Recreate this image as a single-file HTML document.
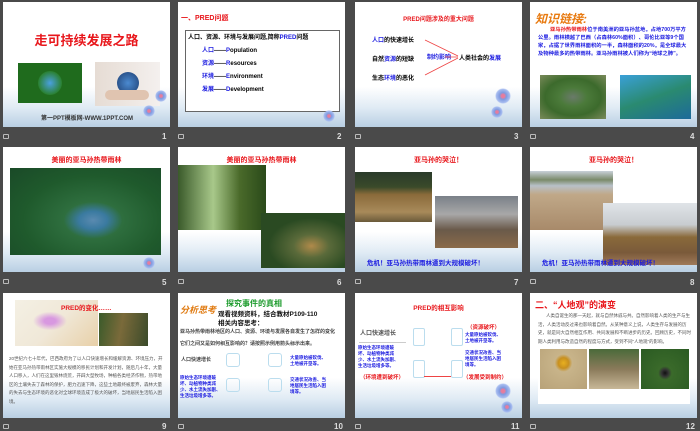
<!DOCTYPE html>
<html><head><meta charset="utf-8"><style>
*{margin:0;padding:0;box-sizing:border-box}
body{width:700px;height:431px;background:#4a4a4a;position:relative;overflow:hidden;font-family:"Liberation Sans","Noto Sans CJK SC",sans-serif}
.s{position:absolute;width:167px;height:125px;background:linear-gradient(#fff 0,#fff 68%,#dfeaf4 85%,#b9cfe3 100%);overflow:hidden}
.s div,.s svg{position:absolute}
.s span{position:static}
.lab{position:absolute;color:#ddd;font-size:8px;font-weight:bold}
.ic{position:absolute;width:6px;height:5px;border:1px solid #bbb;border-radius:1px}
.t{font-weight:bold;white-space:nowrap;font-size:8px}
.red{color:#e8161b}.blue{color:#1a1ae0}
.fl{width:12px;height:12px;border-radius:50%;background:radial-gradient(#e87c9c 15%,#7f9ae0 30%,#a8bdf0 60%,transparent 70%)}
</style></head><body>

<!-- Row 1 -->
<div class="s" style="left:3px;top:2px">
 <div class="t red" style="left:0;width:167px;text-align:center;top:28px;font-size:13px">走可持续发展之路</div>
 <div style="left:15px;top:61px;width:64px;height:40px;background:#1f6b1d"><div style="left:20px;top:8px;width:24px;height:24px;border-radius:50%;background:radial-gradient(#4aa0e0,#2a8030 70%);"></div></div>
 <div style="left:92px;top:60px;width:65px;height:44px;background:linear-gradient(90deg,#e6dcd4,#f4f0ee)"><div style="left:22px;top:10px;width:22px;height:22px;border-radius:50%;background:radial-gradient(#4b8ad0,#1d3d70)"></div><div style="left:10px;top:28px;width:44px;height:10px;border-radius:6px;background:#e0c4b0"></div></div>
 <div class="t" style="left:38px;top:111px;font-size:6px;color:#333">第一PPT模板网-WWW.1PPT.COM</div>
 <div class="fl" style="left:140px;top:103px"></div><div class="fl" style="left:152px;top:88px"></div>
</div>
<div class="ic" style="left:3px;top:134px"></div><div class="lab" style="left:162px;top:132px">1</div>

<div class="s" style="left:178px;top:2px">
 <div class="t red" style="left:3px;top:11px;font-size:7px">一、PRED问题</div>
 <div style="left:7px;top:28px;width:155px;height:82px;border:1px solid #666;background:#fff">
  <div class="t" style="left:2px;top:1px;font-size:6px;color:#000">人口、资源、环境与发展问题,简称<span class="blue">PRED</span>问题</div>
  <div class="t" style="left:16px;top:14px;font-size:6px;color:#000"><span class="blue">人口</span>——<span class="blue">P</span>opulation</div>
  <div class="t" style="left:16px;top:27px;font-size:6px;color:#000"><span class="blue">资源</span>——<span class="blue">R</span>esources</div>
  <div class="t" style="left:16px;top:40px;font-size:6px;color:#000"><span class="blue">环境</span>——<span class="blue">E</span>nvironment</div>
  <div class="t" style="left:16px;top:53px;font-size:6px;color:#000"><span class="blue">发展</span>——<span class="blue">D</span>evelopment</div>
 </div>
 <div class="fl" style="left:145px;top:108px"></div>
</div>
<div class="ic" style="left:178px;top:134px"></div><div class="lab" style="left:337px;top:132px">2</div>

<div class="s" style="left:355px;top:2px">
 <div class="t red" style="left:0;width:167px;text-align:center;top:12px;font-size:6px">PRED问题涉及的重大问题</div>
 <div class="t" style="left:17px;top:33px;font-size:6px;color:#000"><span class="blue">人口</span>的快速增长</div>
 <div class="t" style="left:17px;top:52px;font-size:6px;color:#000">自然<span class="blue">资源</span>的短缺</div>
 <div class="t" style="left:17px;top:71px;font-size:6px;color:#000">生态<span class="blue">环境</span>的恶化</div>
 <div class="t blue" style="left:72px;top:50px;font-size:6px">制约影响</div>
 <div class="t" style="left:104px;top:51px;font-size:6px;color:#000">人类社会的<span class="blue">发展</span></div>
 <svg style="left:0;top:0" width="167" height="125"><path d="M70 38 L103 54 M70 73 L103 56 M90 55 L103 55" stroke="#e44" stroke-width=".8" fill="none"/></svg>
 <div class="fl" style="left:140px;top:86px;width:16px;height:16px"></div><div class="fl" style="left:136px;top:104px"></div>
</div>
<div class="ic" style="left:355px;top:134px"></div><div class="lab" style="left:514px;top:132px">3</div>

<div class="s" style="left:530px;top:2px">
 <div class="t" style="left:5px;top:8px;font-size:12px;color:#e87a10;font-style:italic">知识链接:</div>
 <div style="left:8px;top:24px;width:152px;font-size:5.3px;line-height:8px;font-weight:bold;color:#1a1ae0"><span style="color:#e8161b;padding-left:12px">亚马孙热带雨林</span>位于南美洲的亚马孙盆地，占地700万平方公里。雨林横越了巴西（占森林60%面积）、哥伦比亚等9个国家，占据了世界雨林面积的一半，森林面积的20%，是全球最大及物种最多的热带雨林。亚马孙雨林被人们称为“地球之肺”。</div>
 <div style="left:10px;top:73px;width:66px;height:44px;background:radial-gradient(ellipse at 50% 50%,#6a7a6a 0,#4b7a3a 30%,#3c6a2c 60%,#7a8a5a)"></div>
 <div style="left:90px;top:73px;width:71px;height:44px;background:linear-gradient(160deg,#3aa0d8,#2a8a70 50%,#1d6a9a)"></div>
</div>
<div class="ic" style="left:530px;top:134px"></div><div class="lab" style="left:690px;top:132px">4</div>

<!-- Row 2 -->
<div class="s" style="left:3px;top:147px">
 <div class="t red" style="left:0;width:167px;text-align:center;top:8px;font-size:7px">美丽的亚马孙热带雨林</div>
 <div style="left:7px;top:21px;width:151px;height:87px;background:radial-gradient(ellipse at 55% 60%,#5a8ab0 0,#3a7aa0 12%,#2e6e3e 25%,#1f5a2c 60%,#1a4a28)"></div>
 <div class="fl" style="left:140px;top:110px"></div>
</div>
<div class="ic" style="left:3px;top:279px"></div><div class="lab" style="left:162px;top:278px">5</div>

<div class="s" style="left:178px;top:147px">
 <div class="t red" style="left:0;width:167px;text-align:center;top:8px;font-size:7px">美丽的亚马孙热带雨林</div>
 <div style="left:0;top:18px;width:88px;height:65px;background:linear-gradient(90deg,#3a5a2a,#a8c88a 40%,#4a6a2a 70%,#2a4a1a)"></div>
 <div style="left:83px;top:66px;width:84px;height:55px;background:radial-gradient(ellipse at 60% 60%,#b08a4a 0,#5a6a3a 25%,#2a4a22 60%)"></div>
</div>
<div class="ic" style="left:178px;top:279px"></div><div class="lab" style="left:337px;top:278px">6</div>

<div class="s" style="left:355px;top:147px">
 <div class="t red" style="left:0;width:167px;text-align:center;top:8px;font-size:7px">亚马孙的哭泣！</div>
 <div style="left:0;top:25px;width:77px;height:50px;background:linear-gradient(#2a3a2a 0,#3a4a2a 30%,#8a6a3a 45%,#a88a5a 80%,#6a5a3a)"></div>
 <div style="left:80px;top:49px;width:83px;height:52px;background:linear-gradient(#7a8088 0,#a8a8a8 35%,#6a5a4a 65%,#8a6a4a)"></div>
 <div class="t blue" style="left:12px;top:110px;font-size:6.5px">危机！亚马孙热带雨林遭到大规模破坏！</div>
</div>
<div class="ic" style="left:355px;top:279px"></div><div class="lab" style="left:514px;top:278px">7</div>

<div class="s" style="left:530px;top:147px">
 <div class="t red" style="left:0;width:167px;text-align:center;top:8px;font-size:7px">亚马孙的哭泣！</div>
 <div style="left:0;top:24px;width:83px;height:59px;background:linear-gradient(#c8d0d8 0,#7a8a6a 15%,#b8c0c8 25%,#c0a888 40%,#a88a6a)"></div>
 <div style="left:73px;top:56px;width:94px;height:62px;background:linear-gradient(#e0e4e8 0,#c8ccd0 35%,#8a6a3a 55%,#7a5a3a 80%,#a07a5a)"></div>
 <div class="t blue" style="left:12px;top:110px;font-size:6.5px">危机！亚马孙热带雨林遭到大规模破坏！</div>
</div>
<div class="ic" style="left:530px;top:279px"></div><div class="lab" style="left:690px;top:278px">8</div>

<!-- Row 3 -->
<div class="s" style="left:3px;top:293px">
 <div style="left:12px;top:7px;width:83px;height:46px;background:linear-gradient(135deg,#f4f0e4,#f0e8d8 50%,#e8d0a8);"><div style="left:15px;top:10px;width:40px;height:22px;background:radial-gradient(#d898e0 20%,transparent 60%)"></div></div>
 <div style="left:96px;top:20px;width:49px;height:33px;background:linear-gradient(100deg,#3a5a2a,#7a6a3a 45%,#3a4a2a)"></div>
 <div class="t red" style="left:58px;top:9px;font-size:6.5px">PRED的变化……</div>
 <div style="left:6px;top:62px;width:155px;font-size:4.5px;line-height:8.5px;color:#555">20世纪六七十年代，巴西政府为了以人口快速增长和缓解资源、环境压力，开始在亚马孙热带雨林区实施大规模的移民计划和开发计划，随后几十年，大量人口移入，人们在这里毁林烧荒，开辟大型牧场，种植各类经济作物，热带地区的土壤失去了森林的保护，肥力迅速下降，这些土地最终被废弃，森林大量的失去与生态环境的恶化对全球环境造成了极大的破坏，当地居民生活陷入困境。</div>
</div>
<div class="ic" style="left:3px;top:424px"></div><div class="lab" style="left:162px;top:422px">9</div>

<div class="s" style="left:178px;top:293px">
 <div class="t" style="left:2px;top:10px;font-size:9px;color:#e07a10;font-style:italic">分析思考</div>
 <div class="t" style="left:48px;top:5px;font-size:8px;color:#1a9a2a">探究事件的真相</div>
 <div class="t" style="left:40px;top:15px;font-size:6.5px;color:#111">观看视频资料，结合教材P109-110</div>
 <div class="t" style="left:40px;top:24px;font-size:6.5px;color:#111">相关内容思考：</div>
 <div class="t" style="left:2px;top:35px;font-size:5px;color:#444">亚马孙热带雨林地区的人口、资源、环境与发展各自发生了怎样的变化</div>
 <div class="t" style="left:2px;top:47px;font-size:5px;color:#444">它们之间又是如何相互影响的？请按照示例用箭头标示出来。</div>
 <div class="t" style="left:3px;top:63px;font-size:5px;color:#444">人口快速增长</div>
 <div class="t blue" style="left:2px;top:82px;font-size:4.5px;line-height:6px">原始生态环境遭破<br>坏、动植物种类减<br>少、水土流失加剧、<br>生活垃圾增多等。</div>
 <div class="t blue" style="left:112px;top:62px;font-size:4.5px;line-height:6px">大量原始被砍伐、<br>土地被开垦等。</div>
 <div class="t blue" style="left:112px;top:84px;font-size:4.5px;line-height:6px">交通状况改善、当<br>地居民生活陷入困<br>境等。</div>
 <div style="left:48px;top:60px;width:14px;height:14px;border:1px solid #bde;border-radius:3px"></div>
 <div style="left:90px;top:60px;width:14px;height:14px;border:1px solid #bde;border-radius:3px"></div>
 <div style="left:48px;top:85px;width:14px;height:14px;border:1px solid #bde;border-radius:3px"></div>
 <div style="left:90px;top:85px;width:14px;height:14px;border:1px solid #bde;border-radius:3px"></div>
</div>
<div class="ic" style="left:178px;top:424px"></div><div class="lab" style="left:334px;top:422px">10</div>

<div class="s" style="left:355px;top:293px">
 <div class="t red" style="left:0;width:167px;text-align:center;top:9px;font-size:6.5px">PRED的相互影响</div>
 <div class="t" style="left:5px;top:35px;font-size:6px;color:#555">人口快速增长</div>
 <div style="left:4px;top:49px;width:47px;height:1px;background:#ccc"></div>
 <div class="t blue" style="left:3px;top:52px;font-size:4.5px;line-height:6px">原始生态环境遭破<br>坏、动植物种类减<br>少、水土流失加剧、<br>生活垃圾增多等。</div>
 <div class="t red" style="left:5px;top:80px;font-size:5.5px">（环境遭到破坏）</div>
 <div class="t red" style="left:112px;top:30px;font-size:5.5px">（资源破坏）</div>
 <div class="t blue" style="left:110px;top:39px;font-size:4.5px;line-height:6px">大量原始被砍伐、<br>土地被开垦等。</div>
 <div class="t blue" style="left:110px;top:57px;font-size:4.5px;line-height:6px">交通状况改善、当<br>地居民生活陷入困<br>境等。</div>
 <div class="t red" style="left:108px;top:80px;font-size:5.5px">（发展受到制约）</div>
 <div style="left:58px;top:35px;width:12px;height:18px;border:1px solid #bde;border-radius:2px"></div>
 <div style="left:96px;top:35px;width:12px;height:18px;border:1px solid #bde;border-radius:2px"></div>
 <div style="left:58px;top:67px;width:12px;height:18px;border:1px solid #bde;border-radius:2px"></div>
 <div style="left:96px;top:67px;width:12px;height:18px;border:1px solid #bde;border-radius:2px"></div>
 <div style="left:69px;top:83px;width:27px;height:1px;background:#e44"></div>
 <div class="fl" style="left:140px;top:90px;width:16px;height:16px"></div><div class="fl" style="left:146px;top:108px"></div>
</div>
<div class="ic" style="left:355px;top:424px"></div><div class="lab" style="left:511px;top:422px">11</div>

<div class="s" style="left:530px;top:293px">
 <div class="t red" style="left:5px;top:5px;font-size:9px">二、“人地观”的演变</div>
 <div style="left:8px;top:19px;width:153px;font-size:4.5px;line-height:8.5px;color:#555;text-indent:8px">人类自诞生的那一天起，就与自然休戚与共。自然影响着人类的生产与生活，人类活动反过来也影响着自然。从某种意义上说，人类生存与发展的历史，就是同大自然相互作用、共同发展和不断进步的历史。回顾历史，不同时期人类利用与改造自然的程度与方式，受到不同“人地观”的影响。</div>
 <div style="left:8px;top:54px;width:152px;height:57px;background:#fff"></div>
 <div style="left:10px;top:56px;width:47px;height:40px;background:radial-gradient(circle at 50% 35%,#e8b020 0,#c89020 15%,#c8b48a 25%,#b8a278)"></div>
 <div style="left:59px;top:56px;width:50px;height:40px;background:linear-gradient(#4a6a3a,#8a7a5a 50%,#c8b898)"></div>
 <div style="left:111px;top:56px;width:48px;height:40px;background:radial-gradient(circle at 50% 60%,#111 0,#333 10%,#3a6a2a 20%,#2a5a22)"></div>
</div>
<div class="ic" style="left:530px;top:424px"></div><div class="lab" style="left:686px;top:422px">12</div>

</body></html>
